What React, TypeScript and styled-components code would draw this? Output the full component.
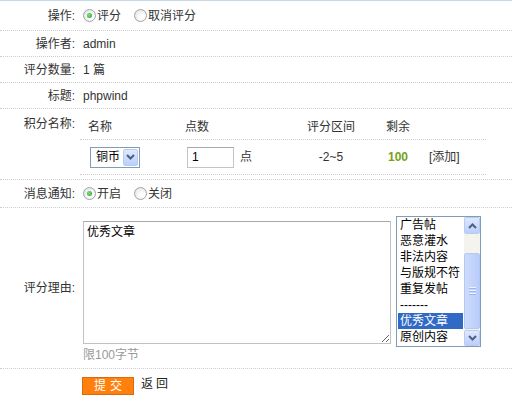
import React, { useState } from 'react'
import styled, { createGlobalStyle } from 'styled-components'

const GlobalStyle = createGlobalStyle`
  body {
    margin: 0;
    background: #fff;
    font: 12px "Liberation Sans", "Noto Sans CJK SC", sans-serif;
    color: #333;
  }
`

const Form = styled.div`
  width: 512px;
  border-top: 1px solid #c6d8e6;
`

const Row = styled.div<{ $h: number }>`
  display: grid;
  grid-template-columns: 75px 1fr;
  height: ${(p) => p.$h}px;
  border-bottom: 1px dotted #cdcdcd;
  box-sizing: content-box;
`

const Label = styled.div<{ $top?: number }>`
  text-align: right;
  white-space: nowrap;
  align-self: ${(p) => (p.$top !== undefined ? 'start' : 'center')};
  padding-top: ${(p) => p.$top ?? 0}px;
  line-height: 14px;
`

const Value = styled.div<{ $pad?: number }>`
  display: flex;
  align-items: center;
  padding-left: ${(p) => p.$pad ?? 8}px;
  line-height: 14px;
`

const RadioLabel = styled.label`
  display: inline-flex;
  align-items: center;
  margin-right: 13px;
  cursor: pointer;
`

const RadioDot = styled.span<{ $on?: boolean }>`
  width: 11px;
  height: 11px;
  border-radius: 50%;
  border: 1px solid #9aa5ae;
  background: radial-gradient(circle at 65% 65%, #ffffff 20%, #dcdcd6 100%);
  display: inline-flex;
  align-items: center;
  justify-content: center;
  margin-right: 1px;
  &::after {
    content: '';
    width: 5px;
    height: 5px;
    border-radius: 50%;
    background: radial-gradient(circle at 40% 40%, #7ee07e, #21a121);
    display: ${(p) => (p.$on ? 'block' : 'none')};
  }
`

const Radio = ({ on, text, onPick }: { on: boolean; text: string; onPick: () => void }) => (
  <RadioLabel onClick={onPick}>
    <RadioDot $on={on} />
    {text}
  </RadioLabel>
)

// credit table inside the "积分名称" row
const CreditTable = styled.div`
  width: 406px;
  margin-top: 5px;
`

const CreditRow = styled.div<{ $h: number }>`
  display: grid;
  grid-template-columns: 97px 113px 82px 52px 62px;
  height: ${(p) => p.$h}px;
  align-items: center;
  border-bottom: 1px dotted #cdcdcd;
`

const Cell = styled.div<{ $center?: boolean; $pad?: number }>`
  display: flex;
  align-items: center;
  justify-content: ${(p) => (p.$center ? 'center' : 'flex-start')};
  padding-left: ${(p) => p.$pad ?? 0}px;
  white-space: nowrap;
`

const SelectBox = styled.div`
  width: 50px;
  height: 21px;
  box-sizing: border-box;
  border: 1px solid #7f9db9;
  display: flex;
  align-items: center;
  justify-content: space-between;
  padding: 0 1px 0 5px;
  color: #000;
  background: #fff;
`

const ArrowBtn = styled.span<{ $h?: number; $w?: number }>`
  width: ${(p) => p.$w ?? 15}px;
  height: ${(p) => p.$h ?? 17}px;
  box-sizing: border-box;
  border: 1px solid #b7cbf3;
  border-radius: 2px;
  background: linear-gradient(#dfe8fd, #bccefa);
  display: flex;
  align-items: center;
  justify-content: center;
`

const Chevron = ({ up }: { up?: boolean }) => (
  <svg width="9" height="6" viewBox="0 0 9 6">
    <path
      d={up ? 'M1 5 L4.5 1.5 L8 5' : 'M1 1 L4.5 4.5 L8 1'}
      fill="none"
      stroke="#4d6185"
      strokeWidth="2"
    />
  </svg>
)

const NumInput = styled.input`
  width: 47px;
  height: 21px;
  box-sizing: border-box;
  border: 1px solid #c4c4c4;
  border-top-color: #a8a8a8;
  padding: 0 4px;
  font: inherit;
  color: #000;
  outline: none;
`

const Unit = styled.span`
  margin-left: 6px;
`

const Remain = styled.span`
  color: #74a21a;
  font-weight: bold;
`

const Column = styled.div`
  display: flex;
  flex-direction: column;
  padding-top: 8px;
`

const Inputs = styled.div`
  display: flex;
  align-items: flex-start;
  gap: 5px;
`

const Reason = styled.textarea`
  width: 308px;
  height: 123px;
  box-sizing: border-box;
  margin-top: 5px;
  border: 1px solid #c2c2c2;
  border-top-color: #a9a9a9;
  padding: 3px 3px;
  font: inherit;
  line-height: 14px;
  color: #000;
  outline: none;
`

const ListBox = styled.div`
  width: 85px;
  height: 131px;
  box-sizing: border-box;
  border: 1px solid #7f9db9;
  display: flex;
  background: #fff;
`

const Options = styled.div`
  flex: 1;
  padding: 0 1px;
`

const Option = styled.div<{ $sel?: boolean }>`
  height: 16px;
  line-height: 16px;
  padding-left: 2px;
  white-space: nowrap;
  color: ${(p) => (p.$sel ? '#fff' : '#000')};
  background: ${(p) => (p.$sel ? '#316ac5' : 'transparent')};
`

const ScrollBar = styled.div`
  width: 16px;
  display: flex;
  flex-direction: column;
  background: #f4f3ee;
`

const Track = styled.div`
  flex: 1;
  display: flex;
  flex-direction: column;
  padding: 19px 0 1px;
`

const Thumb = styled.div`
  flex: 1;
  box-sizing: border-box;
  border: 1px solid #b4c8f6;
  border-radius: 2px;
  background: linear-gradient(90deg, #cddbfc, #b9cdfa);
  display: flex;
  flex-direction: column;
  align-items: center;
  justify-content: center;
  gap: 1px;
`

const Grip = styled.span`
  width: 7px;
  height: 1px;
  background: #eef3fe;
  border-bottom: 1px solid #9eb6ec;
`

const Hint = styled.div`
  color: #999;
  line-height: 14px;
  margin-top: 1px;
`

const Submit = styled.button`
  width: 52px;
  height: 18px;
  box-sizing: border-box;
  border: 1px solid #d86b0c;
  background: #ff800c;
  color: #fff;
  font: inherit;
  letter-spacing: 4px;
  padding: 0 0 0 4px;
  cursor: pointer;
`

const BackLink = styled.a`
  margin-left: 7px;
  color: #222;
  letter-spacing: 3px;
  text-decoration: none;
`

const reasons = ['广告帖', '恶意灌水', '非法内容', '与版规不符', '重复发帖', '-------', '优秀文章', '原创内容']

export default function App() {
  const [rate, setRate] = useState(true)
  const [notify, setNotify] = useState(true)
  const [picked, setPicked] = useState('优秀文章')

  return (
    <>
      <GlobalStyle />
      <Form>
        <Row $h={29}>
          <Label>操作:</Label>
          <Value>
            <Radio on={rate} text="评分" onPick={() => setRate(true)} />
            <Radio on={!rate} text="取消评分" onPick={() => setRate(false)} />
          </Value>
        </Row>
        <Row $h={25}>
          <Label>操作者:</Label>
          <Value>admin</Value>
        </Row>
        <Row $h={25}>
          <Label>评分数量:</Label>
          <Value>1 篇</Value>
        </Row>
        <Row $h={25}>
          <Label>标题:</Label>
          <Value>phpwind</Value>
        </Row>
        <Row $h={70}>
          <Label $top={8}>积分名称:</Label>
          <Value $pad={5} style={{ alignItems: 'flex-start' }}>
            <CreditTable>
              <CreditRow $h={25}>
                <Cell $pad={8}>名称</Cell>
                <Cell $pad={8}>点数</Cell>
                <Cell $center>评分区间</Cell>
                <Cell $center>剩余</Cell>
                <Cell />
              </CreditRow>
              <CreditRow $h={34}>
                <Cell $pad={10}>
                  <SelectBox>
                    铜币
                    <ArrowBtn>
                      <Chevron />
                    </ArrowBtn>
                  </SelectBox>
                </Cell>
                <Cell $pad={10}>
                  <NumInput defaultValue="1" />
                  <Unit>点</Unit>
                </Cell>
                <Cell $center>-2~5</Cell>
                <Cell $center>
                  <Remain>100</Remain>
                </Cell>
                <Cell $pad={5}>[添加]</Cell>
              </CreditRow>
            </CreditTable>
          </Value>
        </Row>
        <Row $h={27}>
          <Label>消息通知:</Label>
          <Value>
            <Radio on={notify} text="开启" onPick={() => setNotify(true)} />
            <Radio on={!notify} text="关闭" onPick={() => setNotify(false)} />
          </Value>
        </Row>
        <Row $h={160}>
          <Label>评分理由:</Label>
          <Value style={{ alignItems: 'flex-start' }}>
            <Column>
              <Inputs>
                <Reason defaultValue="优秀文章" />
                <ListBox>
                  <Options>
                    {reasons.map((r) => (
                      <Option key={r} $sel={r === picked} onClick={() => setPicked(r)}>
                        {r}
                      </Option>
                    ))}
                  </Options>
                  <ScrollBar>
                    <ArrowBtn $h={17} $w={16}>
                      <Chevron up />
                    </ArrowBtn>
                    <Track>
                      <Thumb>
                        <Grip />
                        <Grip />
                        <Grip />
                      </Thumb>
                    </Track>
                    <ArrowBtn $h={16} $w={16}>
                      <Chevron />
                    </ArrowBtn>
                  </ScrollBar>
                </ListBox>
              </Inputs>
              <Hint>限100字节</Hint>
            </Column>
          </Value>
        </Row>
        <Row $h={34} style={{ borderBottom: 'none' }}>
          <Label />
          <Value $pad={7} style={{ alignItems: 'flex-start', paddingTop: 8 }}>
            <Submit>提交</Submit>
            <BackLink href="#">返回</BackLink>
          </Value>
        </Row>
      </Form>
    </>
  )
}
